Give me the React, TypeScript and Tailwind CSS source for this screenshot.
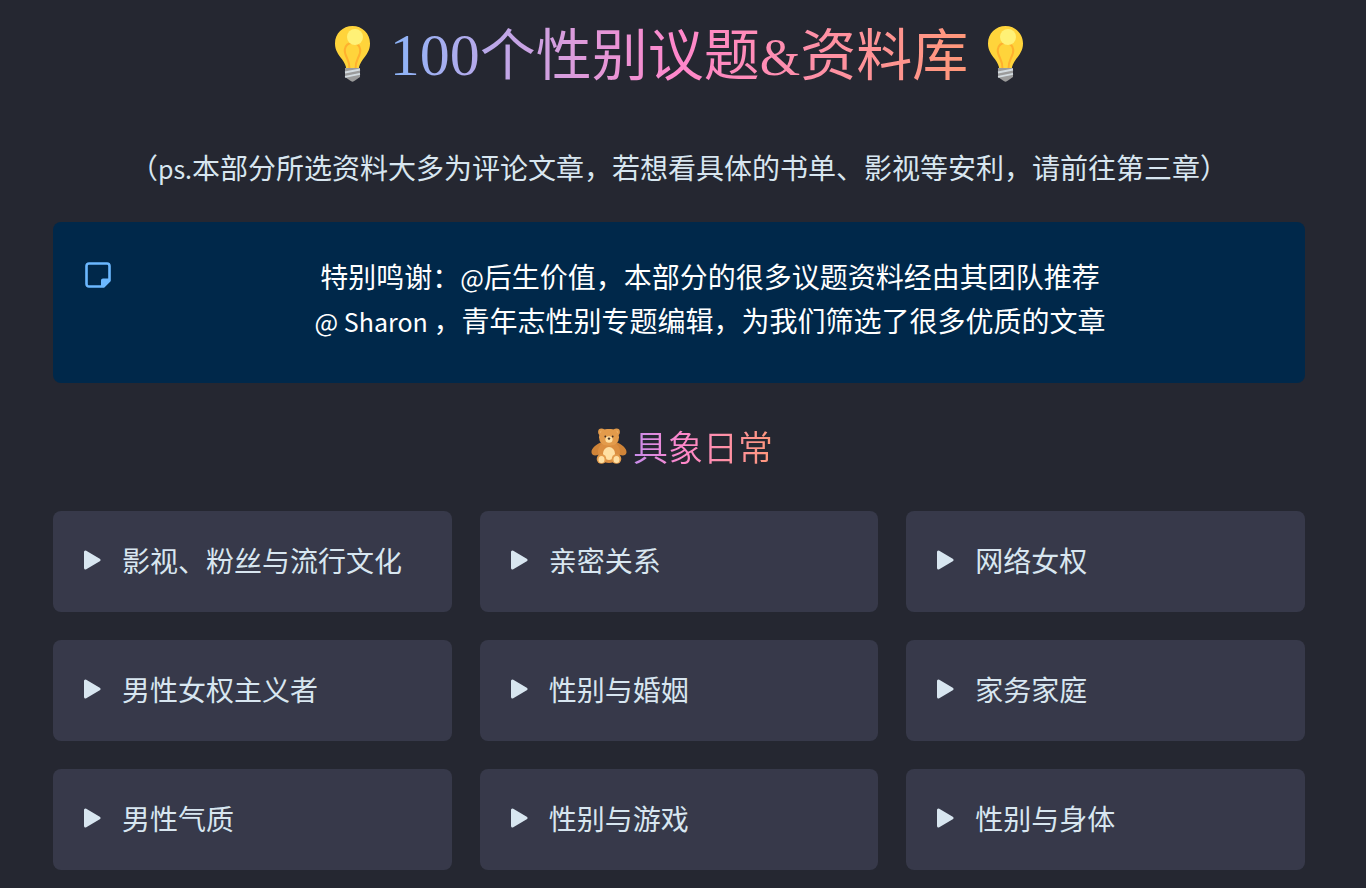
const topics = [
  "影视、粉丝与流行文化",
  "亲密关系",
  "网络女权",
  "男性女权主义者",
  "性别与婚姻",
  "家务家庭",
  "男性气质",
  "性别与游戏",
  "性别与身体",
];

function Bulb() {
  return (
    <svg viewBox="0 0 35 56" className="h-14 w-[35px] shrink-0" aria-hidden="true">
      <path d="M17.5 0C7.7 0 0 7.6 0 17.4c0 7 3.3 10.7 7 15.8 2.800 4 4 6.300 4.300 10.300h12.400c.3-4 1.500-6.300 4.300-10.300C31.700 28.100 35 24.400 35 17.400 35 7.600 27.300 0 17.500 0z" fill="#ffd43b" />
      <path d="M14.500 43c.2-5-1-8-2.500-11-1.300-2.500-2.700-5-2.200-8.500.6-3.800 3.500-6.500 7.700-6.500s7.100 2.700 7.700 6.500c.5 3.500-.9 6-2.200 8.500-1.500 3-2.700 6-2.500 11" fill="none" stroke="#ffb02e" strokeWidth="2" />
      <circle cx="20" cy="11" r="8" fill="#fff176" />
      <path d="M10 42h15v9l-5 3.500c-1.500 1.500-3.500 1.500-5 0L10 51z" fill="#9b9b9b" />
      <path d="M10 46.500l15-3M10 50.800l15-3" stroke="#d3dbe0" strokeWidth="1.800" />
    </svg>
  );
}

function Bear() {
  return (
    <svg viewBox="0 0 36 36" className="size-9 shrink-0" aria-hidden="true">
      <circle cx="10.500" cy="4" r="3.400" fill="#e39b4b" />
      <circle cx="25.500" cy="4" r="3.400" fill="#e39b4b" />
      <circle cx="10.700" cy="4.200" r="1.500" fill="#f5c486" />
      <circle cx="25.300" cy="4.200" r="1.500" fill="#f5c486" />
      <path d="M11 14C6 16 0 20 .5 24.500c.5 4 6 3.500 10 .5zM25 14c5 2 11 6 10.500 10.500-.5 4-6 3.500-10 .5z" fill="#d08438" />
      <ellipse cx="18" cy="24" rx="11" ry="11" fill="#db8e40" />
      <rect x="8" y="1" width="20" height="16.500" rx="8" fill="#e39b4b" />
      <ellipse cx="18" cy="25.500" rx="6" ry="6.500" fill="#ffe0a3" />
      <circle cx="10.500" cy="31" r="4.800" fill="#e39b4b" />
      <circle cx="25.500" cy="31" r="4.800" fill="#e39b4b" />
      <ellipse cx="10.500" cy="31.500" rx="3" ry="3.500" fill="#ffe0a3" />
      <ellipse cx="25.500" cy="31.500" rx="3" ry="3.500" fill="#ffe0a3" />
      <ellipse cx="18" cy="11.500" rx="3.600" ry="3.200" fill="#ffe0a3" />
      <circle cx="14.300" cy="8.500" r=".9" fill="#3c2b24" />
      <circle cx="21.700" cy="8.500" r=".9" fill="#3c2b24" />
      <path d="M17 10.200h2l-1 1.400z" fill="#3c2b24" stroke="#3c2b24" strokeLinejoin="round" />
    </svg>
  );
}

function NoteIcon() {
  return (
    <svg viewBox="0 0 26 26" className="mt-10 size-[26px] shrink-0" aria-hidden="true">
      <path d="M4 1.500h18c1.500 0 2.500 1 2.500 2.500v14.500l-6 6H4c-1.500 0-2.500-1-2.500-2.500V4c0-1.500 1-2.500 2.500-2.500z" fill="none" stroke="#6bb8ff" strokeWidth="2.600" strokeLinejoin="round" />
      <path d="M16 25v-6.500c0-1.200.8-2 2-2h7V18l-7 7z" fill="#6bb8ff" />
    </svg>
  );
}

function Topic({ title }: { title: string }) {
  return (
    <button
      type="button"
      className="flex h-[101px] items-center gap-[21px] rounded-lg bg-[#37394a] pb-1 pl-[31px] text-left"
    >
      <svg viewBox="0 0 17 20" className="h-5 w-[17px] shrink-0" aria-hidden="true">
        <path d="M1.500 2v16L15 10z" fill="#d8e6f0" stroke="#d8e6f0" strokeWidth="3" strokeLinejoin="round" />
      </svg>
      <span>{title}</span>
    </button>
  );
}

export default function App() {
  return (
    <main className="min-h-screen bg-[#252731] pb-[18px] pl-[53px] pr-[61px] font-['Noto_Sans_CJK_SC',sans-serif] text-[28px] leading-[44px] text-[#d8e6f0]">
      <h1 className="flex h-[108px] items-center justify-center gap-5 text-[56px] leading-[108px] font-normal">
        <Bulb />
        <span className="bg-linear-to-r from-[#8ab4f8] via-[#ff87cb] to-[#ff9778] bg-clip-text text-transparent">
          <span className="font-['Liberation_Serif',serif] text-[60px]">100</span>
          个性别议题
          <span className="font-['Liberation_Serif',serif] text-[52px]">&amp;</span>
          资料库
        </span>
        <Bulb />
      </h1>

      <p className="mt-[37px] text-center">
        （<span className="text-[25px] leading-none">ps.</span>
        本部分所选资料大多为评论文章，若想看具体的书单、影视等安利，请前往第三章）
      </p>

      <aside className="mt-[33px] flex h-[161px] rounded-lg bg-[#00284a] px-8 text-white">
        <NoteIcon />
        <p className="mt-8 flex-1 pl-9 text-center">
          特别鸣谢：<span className="text-[25px] leading-none">@</span>
          后生价值，本部分的很多议题资料经由其团队推荐
          <br />
          <span className="text-[25px] leading-none">@ Sharon </span>
          ，青年志性别专题编辑，为我们筛选了很多优质的文章
        </p>
      </aside>

      <h2 className="mt-[38px] mb-10 flex items-center justify-center gap-1.5 pl-1.5 text-[35px] leading-[50px] font-[350]">
        <Bear />
        <span className="bg-linear-to-r from-[#c78ceb] via-[#ff87cb] via-35% to-[#ff9778] bg-clip-text text-transparent">
          具象日常
        </span>
      </h2>

      <div className="grid grid-cols-3 gap-7">
        {topics.map((title) => (
          <Topic key={title} title={title} />
        ))}
      </div>
    </main>
  );
}
